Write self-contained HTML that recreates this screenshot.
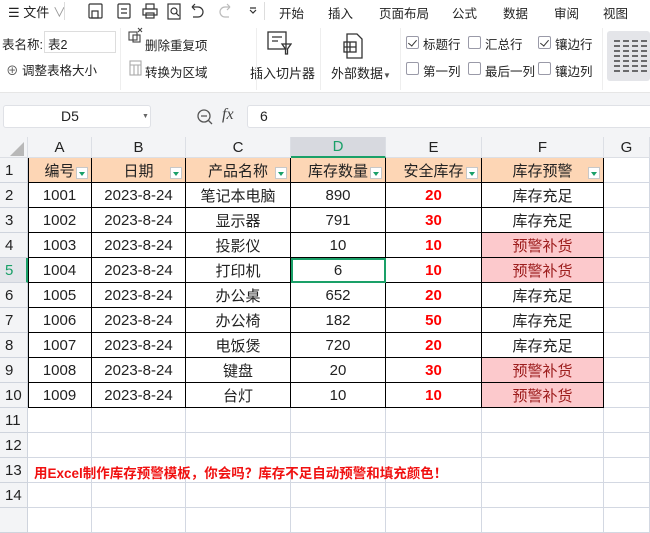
<!DOCTYPE html>
<html><head><meta charset="utf-8">
<style>
*{margin:0;padding:0;box-sizing:border-box}
body{width:650px;height:515px;overflow:hidden;background:#fff;font-family:"Liberation Sans","Noto Sans CJK SC",sans-serif;color:#222;position:relative}
.a{position:absolute;white-space:nowrap}
.t{font-size:12.5px}
.cb{position:absolute;width:13px;height:13px;border:1px solid #9a9aa8;border-radius:2px;background:#fff}
.cb.on::after{content:"";position:absolute;left:3px;top:1px;width:4px;height:7px;border:solid #333;border-width:0 1.5px 1.5px 0;transform:rotate(40deg)}
table{position:absolute;left:0;top:137px;border-collapse:separate;border-spacing:0;table-layout:fixed;font-size:15px}
td{padding:0;text-align:center;vertical-align:middle;border-right:1px solid #d3d8e2;border-bottom:1px solid #d3d8e2;height:25px;overflow:hidden;white-space:nowrap;position:relative}
tr.h td{height:21px;background:#f3f4f6;border-color:#dcdfe5;font-size:15px}
td.rh{background:#f3f4f6;font-size:15px;text-align:left;padding-left:5px;border-color:#cfd4dd}
td.k{border-right:1px solid #000;border-bottom:1px solid #000}
td.hd{background:#fdd6b5;border-right:1px solid #000;border-bottom:1px solid #000}
td.r{color:#f00;font-weight:bold}
td.p{background:#fcc9cc;color:#9c1c1c}
.fa{position:absolute;right:3px;bottom:3px;width:12px;height:12px;border:1px solid #c8c8c8;background:#fff}
.fa::after{content:"";position:absolute;left:2px;top:4px;border:3px solid transparent;border-top:4px solid #1aa068}
</style></head><body>
<div class="a" style="left:0;top:0;width:650px;height:22px;background:#fff"></div>
<div class="a t" style="left:8px;top:2px;font-size:13px">☰ 文件 <span style="color:#999">∨</span></div>
<div class="a" style="left:64px;top:2px;width:1px;height:18px;background:#ddd"></div>
<svg class="a" style="left:88px;top:3px" width="170" height="17" fill="none" stroke="#333" stroke-width="1.2">
<rect x="1" y="1" width="13" height="14" rx="1"/><rect x="4" y="8" width="6" height="7"/>
<rect x="30" y="1" width="12" height="14" rx="1"/><path d="M33 6h6M33 10h6"/>
<rect x="55" y="6" width="14" height="6"/><rect x="58" y="1" width="8" height="5"/><rect x="58" y="10" width="8" height="5"/>
<rect x="80" y="1" width="12" height="15"/><circle cx="86" cy="8" r="3"/><path d="M88 10l3 3"/>
<path d="M104 4h6a5 5 0 0 1 0 10h-5M104 4l3-3M104 4l3 3"/>
<path stroke="#bbb" d="M142 4h-5a5 5 0 0 0 0 10h4M142 4l-3-3M142 4l-3 3"/>
<path d="M162 7l3 3 3-3M162 5h6"/>
</svg>
<div class="a" style="left:264px;top:2px;width:1px;height:18px;background:#ddd"></div>
<div class="a" style="left:279px;top:3px;font-size:12.5px">开始</div>
<div class="a" style="left:328px;top:3px;font-size:12.5px">插入</div>
<div class="a" style="left:379px;top:3px;font-size:12.5px">页面布局</div>
<div class="a" style="left:452px;top:3px;font-size:12.5px">公式</div>
<div class="a" style="left:503px;top:3px;font-size:12.5px">数据</div>
<div class="a" style="left:554px;top:3px;font-size:12.5px">审阅</div>
<div class="a" style="left:603px;top:3px;font-size:12.5px">视图</div>
<div class="a t" style="left:2px;top:34px">表名称:</div>
<div class="a" style="left:44px;top:31px;width:72px;height:22px;border:1px solid #ddd"></div>
<div class="a t" style="left:48px;top:34px">表2</div>
<div class="a t" style="left:6px;top:60px"><span style="color:#555">⊕</span> 调整表格大小</div>
<div class="a" style="left:120px;top:28px;width:1px;height:62px;background:#eee"></div>
<svg class="a" style="left:128px;top:27px" width="16" height="16" fill="none" stroke="#444" stroke-width="1.1"><rect x="1" y="5" width="8" height="8"/><rect x="5" y="8" width="7" height="7"/><path d="M10 1l4 4M14 1l-4 4"/></svg>
<div class="a t" style="left:145px;top:35px">删除重复项</div>
<svg class="a" style="left:128px;top:60px" width="16" height="16" fill="none" stroke="#aaa" stroke-width="1.1"><rect x="2" y="1" width="11" height="14"/><path d="M2 5h11M6 5v10M10 5v10"/></svg>
<div class="a t" style="left:145px;top:62px">转换为区域</div>
<svg class="a" style="left:266px;top:28px" width="26" height="30" fill="none" stroke="#333" stroke-width="1.3"><rect x="2" y="4" width="18" height="17"/><path d="M6 9h10M6 13h6M16 16h9l-3.5 5v5h-2v-5z"/></svg>
<div class="a t" style="left:250px;top:63px;font-size:13px">插入切片器</div>
<div class="a" style="left:256px;top:28px;width:1px;height:62px;background:#eee"></div>
<svg class="a" style="left:342px;top:32px" width="24" height="28" fill="none" stroke="#333" stroke-width="1.3"><path d="M5 2h10l5 5v19H5z"/><rect x="2" y="10" width="12" height="10"/><path d="M2 15h12M8 10v10"/></svg>
<div class="a t" style="left:331px;top:63px;font-size:13px">外部数据<span style="font-size:8px;color:#555">▼</span></div>
<div class="a" style="left:320px;top:28px;width:1px;height:62px;background:#eee"></div>
<div class="a" style="left:400px;top:28px;width:1px;height:62px;background:#eee"></div>
<div class="cb on" style="left:406px;top:36px"></div><div class="a t" style="left:423px;top:34px">标题行</div>
<div class="cb" style="left:468px;top:36px"></div><div class="a t" style="left:485px;top:34px">汇总行</div>
<div class="cb on" style="left:538px;top:36px"></div><div class="a t" style="left:555px;top:34px">镶边行</div>
<div class="cb" style="left:406px;top:62px"></div><div class="a t" style="left:423px;top:61px">第一列</div>
<div class="cb" style="left:468px;top:62px"></div><div class="a t" style="left:485px;top:61px">最后一列</div>
<div class="cb" style="left:538px;top:62px"></div><div class="a t" style="left:555px;top:61px">镶边列</div>
<div class="a" style="left:602px;top:28px;width:1px;height:62px;background:#eee"></div>
<div class="a" style="left:607px;top:31px;width:43px;height:50px;background:#e4e5e9;border-radius:3px"></div>
<svg class="a" style="left:612px;top:38px" width="38" height="40" stroke="#222" stroke-width="1.2"><path d="M2 3h6M11 3h6M20 3h6M29 3h6M2 13h6M11 13h6M20 13h6M29 13h6M2 23h6M11 23h6M20 23h6M29 23h6M2 33h6M11 33h6M20 33h6M29 33h6"/><path d="M2 8h6M11 8h6M20 8h6M29 8h6M2 18h6M11 18h6M20 18h6M29 18h6M2 28h6M11 28h6M20 28h6M29 28h6"/></svg>
<div class="a" style="left:0;top:92px;width:650px;height:45px;background:#f3f4f6;border-top:1px solid #e6e6e6"></div>
<div class="a" style="left:3px;top:105px;width:148px;height:23px;background:#fff;border:1px solid #dfe1e6;border-radius:3px"></div>
<div class="a" style="left:61px;top:108px;font-size:14px">D5</div>
<div class="a" style="left:142px;top:113px;font-size:7px;color:#666">▼</div>
<svg class="a" style="left:196px;top:108px" width="18" height="18" fill="none" stroke="#555" stroke-width="1.3"><circle cx="8" cy="8" r="6"/><path d="M5 8h6M12 12l4 4"/></svg>
<div class="a" style="left:222px;top:106px;font-size:16px;font-style:italic;font-family:'Liberation Serif',serif;color:#444">fx</div>
<div class="a" style="left:247px;top:105px;width:410px;height:23px;background:#fff;border:1px solid #dfe1e6;border-radius:3px"></div>
<div class="a" style="left:260px;top:108px;font-size:14px">6</div>
<table>
<colgroup><col style="width:28px"><col style="width:64px"><col style="width:94px"><col style="width:105px"><col style="width:95px"><col style="width:96px"><col style="width:122px"><col style="width:46px"></colgroup>
<tr class="h"><td><svg style="position:absolute;left:10px;top:5px" width="14" height="14"><path d="M14 0V14H0z" fill="#b8b8b8"/></svg></td><td>A</td><td>B</td><td>C</td><td style="background:#d7d9df;color:#1aa068;border-bottom:2px solid #1aa068">D</td><td>E</td><td>F</td><td>G</td></tr>
<tr><td class="rh">1</td><td class="hd">编号<span class="fa"></span></td><td class="hd">日期<span class="fa"></span></td><td class="hd">产品名称<span class="fa"></span></td><td class="hd">库存数量<span class="fa"></span></td><td class="hd">安全库存<span class="fa"></span></td><td class="hd">库存预警<span class="fa"></span></td><td></td></tr>
<tr><td class="rh">2</td><td class="k">1001</td><td class="k">2023-8-24</td><td class="k">笔记本电脑</td><td class="k">890</td><td class="k r">20</td><td class="k">库存充足</td><td></td></tr>
<tr><td class="rh">3</td><td class="k">1002</td><td class="k">2023-8-24</td><td class="k">显示器</td><td class="k">791</td><td class="k r">30</td><td class="k">库存充足</td><td></td></tr>
<tr><td class="rh">4</td><td class="k">1003</td><td class="k">2023-8-24</td><td class="k">投影仪</td><td class="k">10</td><td class="k r">10</td><td class="k p">预警补货</td><td></td></tr>
<tr><td class="rh" style="background:#e3e5ea;color:#1aa068;border-right:2px solid #1aa068">5</td><td class="k">1004</td><td class="k">2023-8-24</td><td class="k">打印机</td><td class="k" style="outline:2px solid #1aa068;outline-offset:-2px">6</td><td class="k r">10</td><td class="k p">预警补货</td><td></td></tr>
<tr><td class="rh">6</td><td class="k">1005</td><td class="k">2023-8-24</td><td class="k">办公桌</td><td class="k">652</td><td class="k r">20</td><td class="k">库存充足</td><td></td></tr>
<tr><td class="rh">7</td><td class="k">1006</td><td class="k">2023-8-24</td><td class="k">办公椅</td><td class="k">182</td><td class="k r">50</td><td class="k">库存充足</td><td></td></tr>
<tr><td class="rh">8</td><td class="k">1007</td><td class="k">2023-8-24</td><td class="k">电饭煲</td><td class="k">720</td><td class="k r">20</td><td class="k">库存充足</td><td></td></tr>
<tr><td class="rh">9</td><td class="k">1008</td><td class="k">2023-8-24</td><td class="k">键盘</td><td class="k">20</td><td class="k r">30</td><td class="k p">预警补货</td><td></td></tr>
<tr><td class="rh">10</td><td class="k">1009</td><td class="k">2023-8-24</td><td class="k">台灯</td><td class="k">10</td><td class="k r">10</td><td class="k p">预警补货</td><td></td></tr>
<tr><td class="rh">11</td><td></td><td></td><td></td><td></td><td></td><td></td><td></td></tr>
<tr><td class="rh">12</td><td></td><td></td><td></td><td></td><td></td><td></td><td></td></tr>
<tr><td class="rh">13</td><td></td><td></td><td></td><td></td><td></td><td></td><td></td></tr>
<tr><td class="rh">14</td><td></td><td></td><td></td><td></td><td></td><td></td><td></td></tr>
<tr><td class="rh"></td><td></td><td></td><td></td><td></td><td></td><td></td><td></td></tr>
</table>
<div class="a" style="left:28px;top:158px;width:1px;height:250px;background:#000"></div>
<div class="a" style="left:34px;top:462px;font-size:13.5px;font-weight:bold;color:#f01010">用Excel制作库存预警模板，你会吗？库存不足自动预警和填充颜色！</div>
</body></html>
